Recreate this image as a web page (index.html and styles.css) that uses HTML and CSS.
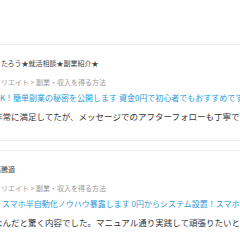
FILE: index.html
```
<!DOCTYPE html>
<html lang="ja">
<head>
    <meta charset="UTF-8">
    <title>レビュー</title>
    <link rel="stylesheet" href="styles.css">
</head>
<body>
<div id="page">
    <div class="spacer"></div>
    <div class="review">
        <div class="user">こたろう★就活相談★副業紹介★</div>
        <div class="category">クリエイト &gt; 副業・収入を得る方法</div>
        <a href="javascript:;" class="title">OK！簡単副業の秘密を公開します 資金0円で初心者でもおすすめです</a>
        <p class="comment">非常に満足してたが、メッセージでのアフターフォローも丁寧でよかったです。</p>
    </div>
    <div class="review">
        <div class="user">高騰適</div>
        <div class="category">クリエイト &gt; 副業・収入を得る方法</div>
        <a href="javascript:;" class="title">】スマホ半自動化ノウハウ暴露します 0円からシステム設置！スマホで</a>
        <p class="comment">なんだと驚く内容でした。マニュアル通り実践して頑張りたいと思います。</p>
    </div>
</div>
</body>
</html>
```

FILE: styles.css
```
html,body,p{
    margin: 0;
    padding: 0;
}
body{
    background: #fff;
    font-family: "Noto Sans CJK JP", "Noto Sans", sans-serif;
    overflow: hidden;
}
#page{
    width: 240px;
    overflow: hidden;
}
.spacer{
    height: 44px;
}
.review{
    margin-left: -6px;
    margin-bottom: 9px;
    padding: 10px 0 16px;
    border-top: 1px solid #ebebeb;
    border-bottom: 1px solid #ebebeb;
}
.user,.category,.title,.comment{
    display: block;
    white-space: nowrap;
    overflow: hidden;
    line-height: 16px;
}
.user{
    font-size: 7px;
    color: #444;
}
.category{
    margin-top: 3px;
    font-size: 7px;
    color: #999;
}
.title{
    font-size: 8px;
    color: #2f9ad6;
    text-decoration: none;
}
.comment{
    margin-top: 2px;
    font-size: 8.5px;
    color: #333;
}
```
